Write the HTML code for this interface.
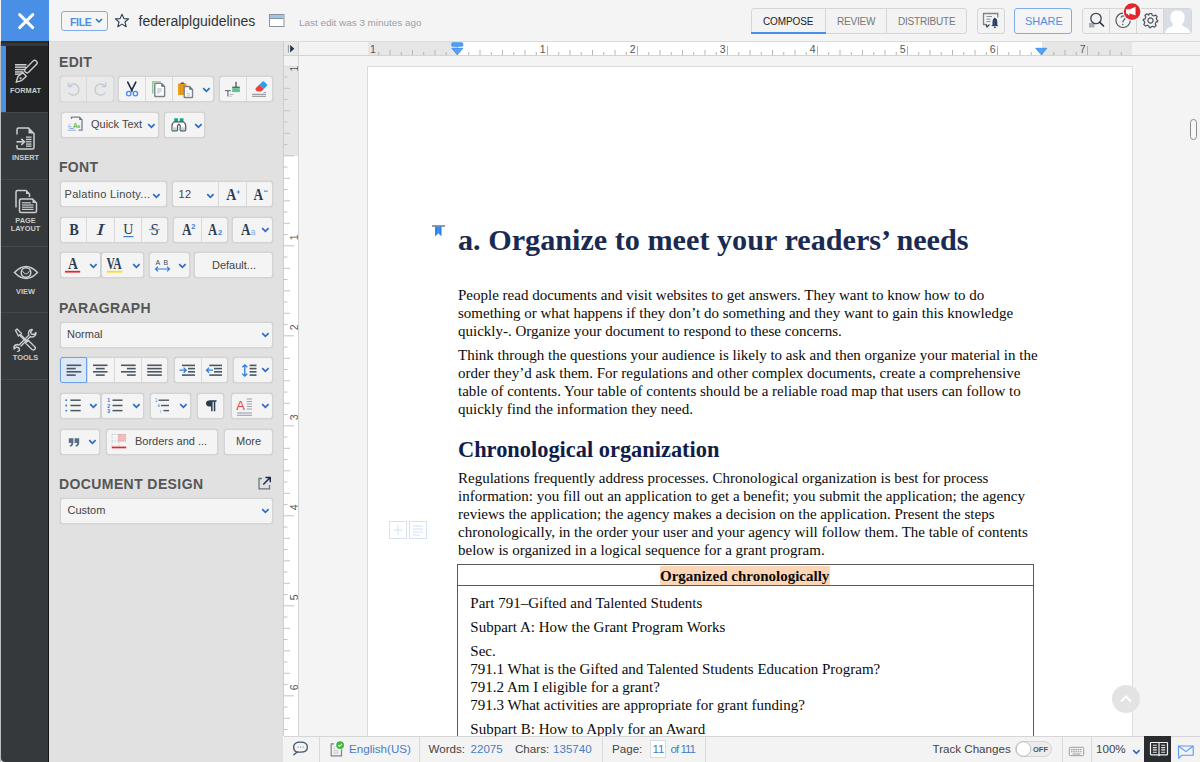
<!DOCTYPE html><html><head><meta charset="utf-8"><style>
*{box-sizing:border-box;margin:0;padding:0}
html,body{width:1200px;height:762px;overflow:hidden;background:#f4f4f4;font-family:"Liberation Sans",sans-serif;position:relative}
.a{position:absolute}
.t{position:absolute;white-space:nowrap}
.btn{position:absolute;background:#f4f4f4;border:1px solid #d4d4d4;border-radius:3px;box-shadow:0 0 1.2px rgba(0,0,0,0.18)}
.dis{background:#e9e9e9;border-color:#dcdcdc}
.dv{position:absolute;width:1px;background:#d9d9d9}
.h{position:absolute;left:59px;font-size:14px;font-weight:bold;color:#565656;line-height:14px;white-space:nowrap;letter-spacing:0.3px}
.bt{position:absolute;font-size:11px;color:#444;line-height:12px;white-space:nowrap}
.tlab{position:absolute;left:2px;width:47px;text-align:center;color:#c9cbcd;font-size:7.4px;font-weight:bold;line-height:8px;letter-spacing:0px}
.p{position:absolute;left:458px;font-family:"Liberation Serif",serif;font-size:15px;line-height:18px;white-space:nowrap;color:#1a1a1a}
.sb{position:absolute;font-size:11.6px;line-height:14px;color:#444;white-space:nowrap}
.bl{color:#4a7cc4}
</style></head><body>
<div class="a" style="left:0;top:0;width:1px;height:762px;background:#bdbdbd"></div>
<div class="a" style="left:0;top:0;width:1200px;height:42px;background:#f4f4f4;border-bottom:1px solid #dcdcdc"></div>
<div class="a" style="left:1px;top:0;width:48px;height:41.4px;background:#4a8fe6"></div>
<div class="a" style="left:1px;top:41px;width:47px;height:721px;background:#35393c;border-bottom-left-radius:4px"></div>
<div class="a" style="left:1px;top:41.4px;width:47px;height:1.6px;background:#2e2a1c"></div>
<div class="a" style="left:48px;top:41px;width:1px;height:721px;background:#141516"></div>
<div class="a" style="left:49px;top:42px;width:234px;height:720px;background:#e1e1e1"></div>
<svg class="a" style="left:1px;top:0" width="47" height="41"><path d="M18.6 14.6 L31.8 27.6 M31.8 14.6 L18.6 27.6" stroke="#fff" stroke-width="2.9" stroke-linecap="round"/></svg>
<div class="a" style="left:61px;top:11px;width:47px;height:20px;border:1px solid #80abee;border-radius:3px;background:#f5f5f5"></div>
<div class="t" style="left:70px;top:15.5px;font-size:10.5px;font-weight:bold;color:#4a8fe6;line-height:12px;letter-spacing:-0.3px">FILE</div>
<svg class="a" style="left:95px;top:18px" width="8" height="6"><path d="M1 1 L4 4 L7 1" stroke="#2f6bc4" stroke-width="1.5" fill="none"/></svg>
<svg class="a" style="left:114px;top:13px" width="16" height="15"><path d="M8 1.2 L9.9 5.6 L14.6 5.9 L11 9 L12.2 13.7 L8 11.1 L3.8 13.7 L5 9 L1.4 5.9 L6.1 5.6 Z" stroke="#2c3e50" stroke-width="1.1" fill="none" stroke-linejoin="round"/></svg>
<div class="t" style="left:138.5px;top:13px;font-size:14px;color:#333;line-height:16px">federalplguidelines</div>
<svg class="a" style="left:269px;top:14px" width="16" height="13"><rect x="0.5" y="0.5" width="14.5" height="12" fill="#fff" stroke="#8a939b"/><rect x="1" y="1" width="13.5" height="3" fill="#9cc7ea"/><path d="M1 4.5 H14.5" stroke="#8a939b"/></svg>
<div class="t" style="left:299px;top:17px;font-size:9.9px;color:#9aa0a6;line-height:11px">Last edit was 3 minutes ago</div>
<div class="a" style="left:751px;top:8px;width:216px;height:26px;border:1px solid #d6d6d6;border-radius:3px;background:#f3f3f3"></div>
<div class="a" style="left:825px;top:9px;width:1px;height:24px;background:#d6d6d6"></div>
<div class="a" style="left:886px;top:9px;width:1px;height:24px;background:#d6d6d6"></div>
<div class="a" style="left:751px;top:32px;width:75px;height:2px;background:#4a8fe6"></div>
<div class="t" style="left:763px;top:16px;font-size:10px;color:#222;line-height:11px;letter-spacing:-0.1px">COMPOSE</div>
<div class="t" style="left:837px;top:16px;font-size:10px;color:#777;line-height:11px;letter-spacing:-0.2px">REVIEW</div>
<div class="t" style="left:898px;top:16px;font-size:10px;color:#777;line-height:11px;letter-spacing:-0.2px">DISTRIBUTE</div>
<div class="a" style="left:977px;top:8px;width:28px;height:26px;border:1px solid #d6d6d6;border-radius:3px;background:#f3f3f3"></div>
<div class="a" style="left:1014px;top:8px;width:58px;height:26px;border:1px solid #7fabef;border-radius:3px;background:#f5f5f5"></div>
<div class="t" style="left:1025px;top:15px;font-size:11px;color:#4a8fe6;line-height:12px">SHARE</div>
<div class="a" style="left:1082px;top:8px;width:110px;height:26px;border:1px solid #d6d6d6;border-radius:3px;background:#f3f3f3;overflow:hidden"><div class="a" style="left:81px;top:0;width:29px;height:26px;background:#d8dde6"></div></div>
<div class="a" style="left:1109px;top:9px;width:1px;height:24px;background:#d6d6d6"></div>
<div class="a" style="left:1136px;top:9px;width:1px;height:24px;background:#d6d6d6"></div>
<div class="a" style="left:1163px;top:9px;width:1px;height:24px;background:#d6d6d6"></div>

<div class="a" style="left:1px;top:46px;width:47px;height:66px;background:#232425"></div>
<div class="a" style="left:1px;top:46px;width:5px;height:66px;background:#4a8fe6"></div>
<div class="a" style="left:6px;top:46px;width:1px;height:66px;background:#2a1f1a"></div>
<div class="a" style="left:1px;top:112px;width:47px;height:1px;background:#45484b"></div>
<div class="a" style="left:1px;top:179px;width:47px;height:1px;background:#45484b"></div>
<div class="a" style="left:1px;top:246px;width:47px;height:1px;background:#45484b"></div>
<div class="a" style="left:1px;top:312px;width:47px;height:1px;background:#45484b"></div>
<div class="a" style="left:1px;top:379px;width:47px;height:1px;background:#45484b"></div>
<div class="tlab" style="top:87px">FORMAT</div>
<div class="tlab" style="top:153.5px">INSERT</div>
<div class="tlab" style="top:216.5px">PAGE</div>
<div class="tlab" style="top:224.5px">LAYOUT</div>
<div class="tlab" style="top:288px">VIEW</div>
<div class="tlab" style="top:353.5px">TOOLS</div>
<div class="h" style="top:55px">EDIT</div>
<div class="h" style="top:159.5px">FONT</div>
<div class="h" style="top:300.5px">PARAGRAPH</div>
<div class="h" style="top:476.5px;letter-spacing:0.4px">DOCUMENT DESIGN</div>
<div class="btn dis" style="left:60px;top:76px;width:54px;height:26px"></div><div class="dv" style="left:86px;top:77px;height:24px"></div>
<div class="btn " style="left:118px;top:76px;width:96px;height:26px"></div><div class="dv" style="left:145px;top:77px;height:24px"></div><div class="dv" style="left:172px;top:77px;height:24px"></div>
<div class="btn " style="left:219px;top:76px;width:54px;height:26px"></div><div class="dv" style="left:246px;top:77px;height:24px"></div>
<svg class="a" style="left:202px;top:86px" width="9" height="8"><path d="M1.2 2.2 L4.4 5.4 L7.6 2.2" stroke="#2f6bc4" stroke-width="1.7" fill="none"/></svg>
<div class="btn " style="left:61px;top:112px;width:98px;height:26px"></div>
<div class="bt" style="left:91px;top:118px">Quick Text</div>
<svg class="a" style="left:147px;top:122px" width="9" height="8"><path d="M1.2 2.2 L4.4 5.4 L7.6 2.2" stroke="#2f6bc4" stroke-width="1.7" fill="none"/></svg>
<div class="btn " style="left:164px;top:112px;width:41px;height:26px"></div>
<svg class="a" style="left:194px;top:122px" width="9" height="8"><path d="M1.2 2.2 L4.4 5.4 L7.6 2.2" stroke="#2f6bc4" stroke-width="1.7" fill="none"/></svg>
<div class="btn " style="left:60px;top:181px;width:107px;height:26px"></div>
<div class="bt" style="left:64.5px;top:188px;letter-spacing:0.3px">Palatino Linoty...</div>
<svg class="a" style="left:152px;top:192px" width="9" height="8"><path d="M1.2 2.2 L4.4 5.4 L7.6 2.2" stroke="#2f6bc4" stroke-width="1.7" fill="none"/></svg>
<div class="btn " style="left:172px;top:181px;width:101px;height:26px"></div><div class="dv" style="left:218px;top:182px;height:24px"></div><div class="dv" style="left:246px;top:182px;height:24px"></div>
<div class="bt" style="left:178.5px;top:188px;font-size:11px;letter-spacing:0.3px">12</div>
<svg class="a" style="left:206px;top:192px" width="9" height="8"><path d="M1.2 2.2 L4.4 5.4 L7.6 2.2" stroke="#2f6bc4" stroke-width="1.7" fill="none"/></svg>
<div class="btn " style="left:60px;top:217px;width:108px;height:26px"></div><div class="dv" style="left:86px;top:218px;height:24px"></div><div class="dv" style="left:114px;top:218px;height:24px"></div><div class="dv" style="left:141px;top:218px;height:24px"></div>
<div class="btn " style="left:173px;top:217px;width:55px;height:26px"></div><div class="dv" style="left:201px;top:218px;height:24px"></div>
<div class="btn " style="left:232px;top:217px;width:41px;height:26px"></div>
<svg class="a" style="left:261px;top:226px" width="9" height="8"><path d="M1.2 2.2 L4.4 5.4 L7.6 2.2" stroke="#2f6bc4" stroke-width="1.7" fill="none"/></svg>
<div class="btn " style="left:60px;top:252px;width:41px;height:26px"></div>
<svg class="a" style="left:89px;top:262px" width="9" height="8"><path d="M1.2 2.2 L4.4 5.4 L7.6 2.2" stroke="#2f6bc4" stroke-width="1.7" fill="none"/></svg>
<div class="btn " style="left:101px;top:252px;width:43px;height:26px"></div>
<svg class="a" style="left:132px;top:262px" width="9" height="8"><path d="M1.2 2.2 L4.4 5.4 L7.6 2.2" stroke="#2f6bc4" stroke-width="1.7" fill="none"/></svg>
<div class="btn " style="left:149px;top:252px;width:41px;height:26px"></div>
<svg class="a" style="left:178px;top:262px" width="9" height="8"><path d="M1.2 2.2 L4.4 5.4 L7.6 2.2" stroke="#2f6bc4" stroke-width="1.7" fill="none"/></svg>
<div class="btn " style="left:194px;top:252px;width:79px;height:26px"></div>
<div class="bt" style="left:212px;top:259px">Default...</div>
<div class="btn " style="left:60px;top:322px;width:213px;height:26px"></div>
<div class="bt" style="left:67px;top:328px">Normal</div>
<svg class="a" style="left:261px;top:331px" width="9" height="8"><path d="M1.2 2.2 L4.4 5.4 L7.6 2.2" stroke="#2f6bc4" stroke-width="1.7" fill="none"/></svg>
<div class="btn " style="left:60px;top:357px;width:108px;height:26px"></div><div class="dv" style="left:87px;top:358px;height:24px"></div><div class="dv" style="left:114px;top:358px;height:24px"></div><div class="dv" style="left:141px;top:358px;height:24px"></div>
<div class="a" style="left:59.5px;top:357px;width:27.5px;height:26px;background:#dce8f8;border:1px solid #6ea2e4;border-radius:3px 0 0 3px"></div>
<div class="btn " style="left:174px;top:357px;width:54px;height:26px"></div><div class="dv" style="left:201px;top:358px;height:24px"></div>
<div class="btn " style="left:233px;top:357px;width:40px;height:26px"></div>
<svg class="a" style="left:261px;top:366px" width="9" height="8"><path d="M1.2 2.2 L4.4 5.4 L7.6 2.2" stroke="#2f6bc4" stroke-width="1.7" fill="none"/></svg>
<div class="btn " style="left:60px;top:393px;width:41px;height:26px"></div>
<svg class="a" style="left:89px;top:402px" width="9" height="8"><path d="M1.2 2.2 L4.4 5.4 L7.6 2.2" stroke="#2f6bc4" stroke-width="1.7" fill="none"/></svg>
<div class="btn " style="left:101px;top:393px;width:43px;height:26px"></div>
<svg class="a" style="left:132px;top:402px" width="9" height="8"><path d="M1.2 2.2 L4.4 5.4 L7.6 2.2" stroke="#2f6bc4" stroke-width="1.7" fill="none"/></svg>
<div class="btn " style="left:150px;top:393px;width:41px;height:26px"></div>
<svg class="a" style="left:179px;top:402px" width="9" height="8"><path d="M1.2 2.2 L4.4 5.4 L7.6 2.2" stroke="#2f6bc4" stroke-width="1.7" fill="none"/></svg>
<div class="btn " style="left:197px;top:393px;width:27px;height:26px"></div>
<div class="btn " style="left:231px;top:393px;width:42px;height:26px"></div>
<svg class="a" style="left:261px;top:402px" width="9" height="8"><path d="M1.2 2.2 L4.4 5.4 L7.6 2.2" stroke="#2f6bc4" stroke-width="1.7" fill="none"/></svg>
<div class="btn " style="left:60px;top:429px;width:40px;height:26px"></div>
<svg class="a" style="left:88px;top:438px" width="9" height="8"><path d="M1.2 2.2 L4.4 5.4 L7.6 2.2" stroke="#2f6bc4" stroke-width="1.7" fill="none"/></svg>
<div class="btn " style="left:106px;top:429px;width:112px;height:26px"></div>
<div class="bt" style="left:135px;top:435px">Borders and ...</div>
<div class="btn " style="left:224px;top:429px;width:49px;height:26px"></div>
<div class="bt" style="left:236px;top:435px">More</div>
<div class="btn " style="left:60px;top:498px;width:213px;height:26px"></div>
<div class="bt" style="left:67.5px;top:504px">Custom</div>
<svg class="a" style="left:261px;top:507px" width="9" height="8"><path d="M1.2 2.2 L4.4 5.4 L7.6 2.2" stroke="#2f6bc4" stroke-width="1.7" fill="none"/></svg>
<div class="a" style="left:283px;top:42px;width:1px;height:694px;background:#cdcdcd"></div>
<div class="a" style="left:284px;top:42px;width:15px;height:694px;background:#fff;border-right:1px solid #d4d4d4"></div>
<div class="a" style="left:284px;top:42px;width:15px;height:14px;background:#e8e8e8;border-right:1px solid #d4d4d4"></div>
<div class="a" style="left:284px;top:56px;width:15px;height:10px;background:#f3f3f3;border-right:1px solid #d4d4d4"></div>
<div class="a" style="left:284px;top:66px;width:15px;height:89.5px;background:#e6e6e6;border-right:1px solid #d4d4d4"></div>
<div class="a" style="left:284px;top:55px;width:916px;height:1px;background:#d4d4d4"></div>
<div class="a" style="left:299px;top:42px;width:901px;height:13px;background:#f3f3f3"></div>
<div class="a" style="left:367.5px;top:42px;width:90px;height:13px;background:#e6e6e6"></div>
<div class="a" style="left:457.5px;top:42px;width:584px;height:13px;background:#fff"></div>
<div class="a" style="left:1041.5px;top:42px;width:90.5px;height:13px;background:#e6e6e6"></div>
<svg class="a" style="left:284px;top:42px" width="14" height="13"><rect x="3.9" y="3" width="1" height="7.6" fill="#8a96a3"/><path d="M6.2 3 L10.3 6.8 L6.2 10.6 Z" fill="#1e3350"/></svg>
<svg class="a" style="left:298px;top:42px" width="902" height="13"><rect x="80.25" y="10" width="1" height="3" fill="#b4b4b4"/><rect x="91.50" y="8" width="1" height="5" fill="#b4b4b4"/><rect x="102.75" y="10" width="1" height="3" fill="#b4b4b4"/><rect x="114.00" y="8" width="1" height="5" fill="#b4b4b4"/><rect x="125.25" y="10" width="1" height="3" fill="#b4b4b4"/><rect x="136.50" y="8" width="1" height="5" fill="#b4b4b4"/><rect x="147.75" y="10" width="1" height="3" fill="#b4b4b4"/><rect x="159.00" y="4" width="1" height="9" fill="#b4b4b4"/><rect x="170.25" y="10" width="1" height="3" fill="#b4b4b4"/><rect x="181.50" y="8" width="1" height="5" fill="#b4b4b4"/><rect x="192.75" y="10" width="1" height="3" fill="#b4b4b4"/><rect x="204.00" y="8" width="1" height="5" fill="#b4b4b4"/><rect x="215.25" y="10" width="1" height="3" fill="#b4b4b4"/><rect x="226.50" y="8" width="1" height="5" fill="#b4b4b4"/><rect x="237.75" y="10" width="1" height="3" fill="#b4b4b4"/><rect x="249.00" y="4" width="1" height="9" fill="#b4b4b4"/><rect x="260.25" y="10" width="1" height="3" fill="#b4b4b4"/><rect x="271.50" y="8" width="1" height="5" fill="#b4b4b4"/><rect x="282.75" y="10" width="1" height="3" fill="#b4b4b4"/><rect x="294.00" y="8" width="1" height="5" fill="#b4b4b4"/><rect x="305.25" y="10" width="1" height="3" fill="#b4b4b4"/><rect x="316.50" y="8" width="1" height="5" fill="#b4b4b4"/><rect x="327.75" y="10" width="1" height="3" fill="#b4b4b4"/><rect x="339.00" y="4" width="1" height="9" fill="#b4b4b4"/><rect x="350.25" y="10" width="1" height="3" fill="#b4b4b4"/><rect x="361.50" y="8" width="1" height="5" fill="#b4b4b4"/><rect x="372.75" y="10" width="1" height="3" fill="#b4b4b4"/><rect x="384.00" y="8" width="1" height="5" fill="#b4b4b4"/><rect x="395.25" y="10" width="1" height="3" fill="#b4b4b4"/><rect x="406.50" y="8" width="1" height="5" fill="#b4b4b4"/><rect x="417.75" y="10" width="1" height="3" fill="#b4b4b4"/><rect x="429.00" y="4" width="1" height="9" fill="#b4b4b4"/><rect x="440.25" y="10" width="1" height="3" fill="#b4b4b4"/><rect x="451.50" y="8" width="1" height="5" fill="#b4b4b4"/><rect x="462.75" y="10" width="1" height="3" fill="#b4b4b4"/><rect x="474.00" y="8" width="1" height="5" fill="#b4b4b4"/><rect x="485.25" y="10" width="1" height="3" fill="#b4b4b4"/><rect x="496.50" y="8" width="1" height="5" fill="#b4b4b4"/><rect x="507.75" y="10" width="1" height="3" fill="#b4b4b4"/><rect x="519.00" y="4" width="1" height="9" fill="#b4b4b4"/><rect x="530.25" y="10" width="1" height="3" fill="#b4b4b4"/><rect x="541.50" y="8" width="1" height="5" fill="#b4b4b4"/><rect x="552.75" y="10" width="1" height="3" fill="#b4b4b4"/><rect x="564.00" y="8" width="1" height="5" fill="#b4b4b4"/><rect x="575.25" y="10" width="1" height="3" fill="#b4b4b4"/><rect x="586.50" y="8" width="1" height="5" fill="#b4b4b4"/><rect x="597.75" y="10" width="1" height="3" fill="#b4b4b4"/><rect x="609.00" y="4" width="1" height="9" fill="#b4b4b4"/><rect x="620.25" y="10" width="1" height="3" fill="#b4b4b4"/><rect x="631.50" y="8" width="1" height="5" fill="#b4b4b4"/><rect x="642.75" y="10" width="1" height="3" fill="#b4b4b4"/><rect x="654.00" y="8" width="1" height="5" fill="#b4b4b4"/><rect x="665.25" y="10" width="1" height="3" fill="#b4b4b4"/><rect x="676.50" y="8" width="1" height="5" fill="#b4b4b4"/><rect x="687.75" y="10" width="1" height="3" fill="#b4b4b4"/><rect x="699.00" y="4" width="1" height="9" fill="#b4b4b4"/><rect x="710.25" y="10" width="1" height="3" fill="#b4b4b4"/><rect x="721.50" y="8" width="1" height="5" fill="#b4b4b4"/><rect x="732.75" y="10" width="1" height="3" fill="#b4b4b4"/><rect x="744.00" y="8" width="1" height="5" fill="#b4b4b4"/><rect x="755.25" y="10" width="1" height="3" fill="#b4b4b4"/><rect x="766.50" y="8" width="1" height="5" fill="#b4b4b4"/><rect x="777.75" y="10" width="1" height="3" fill="#b4b4b4"/><rect x="789.00" y="4" width="1" height="9" fill="#b4b4b4"/><rect x="800.25" y="10" width="1" height="3" fill="#b4b4b4"/><rect x="811.50" y="8" width="1" height="5" fill="#b4b4b4"/><rect x="822.75" y="10" width="1" height="3" fill="#b4b4b4"/><text x="72.00" y="10.6" font-size="10.5" fill="#555" font-family="Liberation Sans">1</text><text x="247.60" y="10.6" font-size="10.5" fill="#555" font-family="Liberation Sans" text-anchor="end">1</text><text x="337.60" y="10.6" font-size="10.5" fill="#555" font-family="Liberation Sans" text-anchor="end">2</text><text x="427.60" y="10.6" font-size="10.5" fill="#555" font-family="Liberation Sans" text-anchor="end">3</text><text x="517.60" y="10.6" font-size="10.5" fill="#555" font-family="Liberation Sans" text-anchor="end">4</text><text x="607.60" y="10.6" font-size="10.5" fill="#555" font-family="Liberation Sans" text-anchor="end">5</text><text x="697.60" y="10.6" font-size="10.5" fill="#555" font-family="Liberation Sans" text-anchor="end">6</text><text x="787.60" y="10.6" font-size="10.5" fill="#555" font-family="Liberation Sans" text-anchor="end">7</text></svg>
<svg class="a" style="left:451px;top:42px" width="13" height="14"><rect x="0.8" y="0.8" width="11" height="3.4" rx="0.8" fill="#5aa0f5" stroke="#2f86f0" stroke-width="0.8"/><path d="M0.8 6.3 H11.8 L6.3 12.8 Z" fill="#5aa0f5" stroke="#2f86f0" stroke-width="0.8" stroke-linejoin="round"/></svg>
<svg class="a" style="left:1035px;top:42px" width="13" height="14"><path d="M0.8 6.3 H11.8 L6.3 12.8 Z" fill="#5aa0f5" stroke="#2f86f0" stroke-width="0.8" stroke-linejoin="round"/></svg>
<svg class="a" style="left:284px;top:66px" width="14" height="670"><rect x="0" y="-0.70" width="10" height="1" fill="#c4c4c4"/><text x="0" y="0" font-size="10.5" fill="#555" font-family="Liberation Sans" transform="translate(13.6 2.60) rotate(-90)" text-anchor="middle">1</text><rect x="0" y="10.55" width="3.5" height="1" fill="#c4c4c4"/><rect x="0" y="21.80" width="6" height="1" fill="#c4c4c4"/><rect x="0" y="33.05" width="3.5" height="1" fill="#c4c4c4"/><rect x="0" y="44.30" width="6" height="1" fill="#c4c4c4"/><rect x="0" y="55.55" width="3.5" height="1" fill="#c4c4c4"/><rect x="0" y="66.80" width="6" height="1" fill="#c4c4c4"/><rect x="0" y="78.05" width="3.5" height="1" fill="#c4c4c4"/><rect x="0" y="89.30" width="10" height="1" fill="#c4c4c4"/><rect x="0" y="100.55" width="3.5" height="1" fill="#c4c4c4"/><rect x="0" y="111.80" width="6" height="1" fill="#c4c4c4"/><rect x="0" y="123.05" width="3.5" height="1" fill="#c4c4c4"/><rect x="0" y="134.30" width="6" height="1" fill="#c4c4c4"/><rect x="0" y="145.55" width="3.5" height="1" fill="#c4c4c4"/><rect x="0" y="156.80" width="6" height="1" fill="#c4c4c4"/><rect x="0" y="168.05" width="3.5" height="1" fill="#c4c4c4"/><rect x="0" y="179.30" width="10" height="1" fill="#c4c4c4"/><text x="0" y="0" font-size="10.5" fill="#555" font-family="Liberation Sans" transform="translate(13.6 171.30) rotate(-90)" text-anchor="middle">1</text><rect x="0" y="190.55" width="3.5" height="1" fill="#c4c4c4"/><rect x="0" y="201.80" width="6" height="1" fill="#c4c4c4"/><rect x="0" y="213.05" width="3.5" height="1" fill="#c4c4c4"/><rect x="0" y="224.30" width="6" height="1" fill="#c4c4c4"/><rect x="0" y="235.55" width="3.5" height="1" fill="#c4c4c4"/><rect x="0" y="246.80" width="6" height="1" fill="#c4c4c4"/><rect x="0" y="258.05" width="3.5" height="1" fill="#c4c4c4"/><rect x="0" y="269.30" width="10" height="1" fill="#c4c4c4"/><text x="0" y="0" font-size="10.5" fill="#555" font-family="Liberation Sans" transform="translate(13.6 261.30) rotate(-90)" text-anchor="middle">2</text><rect x="0" y="280.55" width="3.5" height="1" fill="#c4c4c4"/><rect x="0" y="291.80" width="6" height="1" fill="#c4c4c4"/><rect x="0" y="303.05" width="3.5" height="1" fill="#c4c4c4"/><rect x="0" y="314.30" width="6" height="1" fill="#c4c4c4"/><rect x="0" y="325.55" width="3.5" height="1" fill="#c4c4c4"/><rect x="0" y="336.80" width="6" height="1" fill="#c4c4c4"/><rect x="0" y="348.05" width="3.5" height="1" fill="#c4c4c4"/><rect x="0" y="359.30" width="10" height="1" fill="#c4c4c4"/><text x="0" y="0" font-size="10.5" fill="#555" font-family="Liberation Sans" transform="translate(13.6 351.30) rotate(-90)" text-anchor="middle">3</text><rect x="0" y="370.55" width="3.5" height="1" fill="#c4c4c4"/><rect x="0" y="381.80" width="6" height="1" fill="#c4c4c4"/><rect x="0" y="393.05" width="3.5" height="1" fill="#c4c4c4"/><rect x="0" y="404.30" width="6" height="1" fill="#c4c4c4"/><rect x="0" y="415.55" width="3.5" height="1" fill="#c4c4c4"/><rect x="0" y="426.80" width="6" height="1" fill="#c4c4c4"/><rect x="0" y="438.05" width="3.5" height="1" fill="#c4c4c4"/><rect x="0" y="449.30" width="10" height="1" fill="#c4c4c4"/><text x="0" y="0" font-size="10.5" fill="#555" font-family="Liberation Sans" transform="translate(13.6 441.30) rotate(-90)" text-anchor="middle">4</text><rect x="0" y="460.55" width="3.5" height="1" fill="#c4c4c4"/><rect x="0" y="471.80" width="6" height="1" fill="#c4c4c4"/><rect x="0" y="483.05" width="3.5" height="1" fill="#c4c4c4"/><rect x="0" y="494.30" width="6" height="1" fill="#c4c4c4"/><rect x="0" y="505.55" width="3.5" height="1" fill="#c4c4c4"/><rect x="0" y="516.80" width="6" height="1" fill="#c4c4c4"/><rect x="0" y="528.05" width="3.5" height="1" fill="#c4c4c4"/><rect x="0" y="539.30" width="10" height="1" fill="#c4c4c4"/><text x="0" y="0" font-size="10.5" fill="#555" font-family="Liberation Sans" transform="translate(13.6 531.30) rotate(-90)" text-anchor="middle">5</text><rect x="0" y="550.55" width="3.5" height="1" fill="#c4c4c4"/><rect x="0" y="561.80" width="6" height="1" fill="#c4c4c4"/><rect x="0" y="573.05" width="3.5" height="1" fill="#c4c4c4"/><rect x="0" y="584.30" width="6" height="1" fill="#c4c4c4"/><rect x="0" y="595.55" width="3.5" height="1" fill="#c4c4c4"/><rect x="0" y="606.80" width="6" height="1" fill="#c4c4c4"/><rect x="0" y="618.05" width="3.5" height="1" fill="#c4c4c4"/><rect x="0" y="629.30" width="10" height="1" fill="#c4c4c4"/><text x="0" y="0" font-size="10.5" fill="#555" font-family="Liberation Sans" transform="translate(13.6 621.30) rotate(-90)" text-anchor="middle">6</text><rect x="0" y="640.55" width="3.5" height="1" fill="#c4c4c4"/><rect x="0" y="651.80" width="6" height="1" fill="#c4c4c4"/><rect x="0" y="663.05" width="3.5" height="1" fill="#c4c4c4"/></svg>
<div class="a" style="left:367px;top:66px;width:766px;height:700px;background:#fff;border:1px solid #dcdcdc"></div>
<div class="a" style="left:1190px;top:119px;width:7px;height:21px;background:#f7f7f7;border:1px solid #8c8c8c;border-radius:3.5px"></div>
<div class="p" style="left:458px;top:221.56px;font-size:30.2px;line-height:36px;font-weight:bold;color:#1b2a52;">a. Organize to meet your readers’ needs</div>
<svg class="a" style="left:431px;top:224px" width="15" height="14"><path d="M1 2 H14" stroke="#3a4a5e" stroke-width="1.1"/><path d="M4 2.5 H10.6 V12.6 L7.3 9.3 L4 12.6 Z" fill="#3f8cf0"/><path d="M5.3 2.5 V10.8 M9.3 2.5 V10.8" stroke="#2277e8" stroke-width="0.8"/></svg>
<div class="p" style="left:458px;top:286.44px;font-size:15px;line-height:18px;color:#0a0a0a;">People read documents and visit websites to get answers. They want to know how to do</div>
<div class="p" style="left:458px;top:304.44px;font-size:15px;line-height:18px;color:#0a0a0a;">something or what happens if they don’t do something and they want to gain this knowledge</div>
<div class="p" style="left:458px;top:322.44px;font-size:15px;line-height:18px;color:#0a0a0a;">quickly-. Organize your document to respond to these concerns.</div>
<div class="p" style="left:458px;top:345.84px;font-size:15px;line-height:18px;color:#0a0a0a;">Think through the questions your audience is likely to ask and then organize your material in the</div>
<div class="p" style="left:458px;top:363.84px;font-size:15px;line-height:18px;color:#0a0a0a;">order they’d ask them. For regulations and other complex documents, create a comprehensive</div>
<div class="p" style="left:458px;top:381.84px;font-size:15px;line-height:18px;color:#0a0a0a;">table of contents. Your table of contents should be a reliable road map that users can follow to</div>
<div class="p" style="left:458px;top:399.84px;font-size:15px;line-height:18px;color:#0a0a0a;">quickly find the information they need.</div>
<div class="p" style="left:458px;top:437.34px;font-size:22.4px;line-height:26px;font-weight:bold;color:#0f1d4a;">Chronological organization</div>
<div class="p" style="left:458px;top:469.24px;font-size:15px;line-height:18px;color:#0a0a0a;">Regulations frequently address processes. Chronological organization is best for process</div>
<div class="p" style="left:458px;top:487.24px;font-size:15px;line-height:18px;color:#0a0a0a;">information: you fill out an application to get a benefit; you submit the application; the agency</div>
<div class="p" style="left:458px;top:505.24px;font-size:15px;line-height:18px;color:#0a0a0a;">reviews the application; the agency makes a decision on the application. Present the steps</div>
<div class="p" style="left:458px;top:523.24px;font-size:15px;line-height:18px;color:#0a0a0a;">chronologically, in the order your user and your agency will follow them. The table of contents</div>
<div class="p" style="left:458px;top:541.24px;font-size:15px;line-height:18px;color:#0a0a0a;">below is organized in a logical sequence for a grant program.</div>
<div class="a" style="left:457px;top:564px;width:577px;height:200px;border:1px solid #5a5a5a"></div>
<div class="a" style="left:458px;top:585px;width:575px;height:1px;background:#5a5a5a"></div>
<div class="a" style="left:659.5px;top:566px;width:170px;height:18.5px;background:#fcd6b6"></div>
<div class="p" style="left:660px;top:566.94px;font-size:15px;line-height:18px;font-weight:bold;color:#0a0a0a;">Organized chronologically</div>
<div class="p" style="left:470.3px;top:594.24px;font-size:15px;line-height:18px;color:#0a0a0a;">Part 791–Gifted and Talented Students</div>
<div class="p" style="left:470.3px;top:618.44px;font-size:15px;line-height:18px;color:#0a0a0a;">Subpart A: How the Grant Program Works</div>
<div class="p" style="left:470.3px;top:642.14px;font-size:15px;line-height:18px;color:#0a0a0a;">Sec.</div>
<div class="p" style="left:470.3px;top:660.34px;font-size:15px;line-height:18px;color:#0a0a0a;">791.1 What is the Gifted and Talented Students Education Program?</div>
<div class="p" style="left:470.3px;top:678.24px;font-size:15px;line-height:18px;color:#0a0a0a;">791.2 Am I eligible for a grant?</div>
<div class="p" style="left:470.3px;top:696.24px;font-size:15px;line-height:18px;color:#0a0a0a;">791.3 What activities are appropriate for grant funding?</div>
<div class="p" style="left:470.3px;top:720.34px;font-size:15px;line-height:18px;color:#0a0a0a;">Subpart B: How to Apply for an Award</div>
<svg class="a" style="left:389px;top:521px" width="40" height="20"><rect x="0.5" y="0.5" width="17" height="17" fill="none" stroke="#d3e0f5"/><path d="M9 4.5 V13.5 M4.5 9 H13.5" stroke="#d3e0f5"/><rect x="20.5" y="0.5" width="17" height="17" fill="none" stroke="#d3e0f5"/><path d="M24 5 H34 M24 8 H34 M24 11 H34 M24 14 H31" stroke="#d3e0f5"/></svg>
<svg class="a" style="left:1111px;top:684px" width="30" height="30"><circle cx="15" cy="15" r="14" fill="#e3e3e3"/><path d="M10 17.5 L15 12.5 L20 17.5" stroke="#fff" stroke-width="2" fill="none"/></svg>
<div class="a" style="left:284px;top:736px;width:916px;height:26px;background:#f3f3f3;border-top:1px solid #d6d6d6"></div>
<div class="a" style="left:318.5px;top:737px;width:1px;height:25px;background:#dadada"></div>
<div class="a" style="left:419px;top:737px;width:1px;height:25px;background:#dadada"></div>
<div class="a" style="left:602px;top:737px;width:1px;height:25px;background:#dadada"></div>
<div class="a" style="left:705px;top:737px;width:1px;height:25px;background:#dadada"></div>
<div class="a" style="left:1062px;top:737px;width:1px;height:25px;background:#dadada"></div>
<div class="a" style="left:1091px;top:737px;width:1px;height:25px;background:#dadada"></div>
<div class="a" style="left:1144px;top:736px;width:27px;height:26px;background:#2a2d30"></div>
<div class="sb" style="left:349px;top:742.4px;color:#4a7cc4">English(US)</div>
<div class="sb" style="left:428.5px;top:742.4px">Words:</div>
<div class="sb" style="left:470.5px;top:742.4px;color:#4a7cc4">22075</div>
<div class="sb" style="left:515px;top:742.4px">Chars:</div>
<div class="sb" style="left:553px;top:742.4px;color:#4a7cc4">135740</div>
<div class="sb" style="left:612px;top:742.4px">Page:</div>
<div class="a" style="left:650px;top:740px;width:16px;height:18px;background:#fff;border:1px solid #dcdcdc"></div>
<div class="sb" style="left:652.5px;top:742.4px;color:#4a7cc4">11</div>
<div class="sb" style="left:670.5px;top:742.4px;color:#4a7cc4;letter-spacing:-1px">of 111</div>
<div class="sb" style="left:932.5px;top:742.4px">Track Changes</div>
<div class="sb" style="left:1096px;top:742.4px">100%</div>
<svg class="a" style="left:1132px;top:748px" width="9" height="8"><path d="M1.2 2.2 L4.4 5.4 L7.6 2.2" stroke="#2f6bc4" stroke-width="1.7" fill="none"/></svg>
<svg class="a" style="left:1px;top:55px" width="47" height="32">
<g fill="#cbcdcf"><rect x="14" y="9" width="11.5" height="1.5"/><rect x="14" y="11.4" width="11" height="1.5"/><rect x="14" y="13.8" width="10" height="1.5"/><rect x="14" y="16.2" width="8.5" height="1.5"/><rect x="14" y="18.4" width="7" height="1.5"/></g>
<g transform="translate(28.3 13.2) rotate(45)"><rect x="-2.4" y="-10" width="4.8" height="15.5" rx="2.4" fill="#232425" stroke="#cbcdcf" stroke-width="1.4"/></g>
<path d="M21.6 17.6 L25.3 21.3 L20.6 25.6 L15.2 27.2 L16.8 21.8 Z" fill="#232425" stroke="#cbcdcf" stroke-width="1.4" stroke-linejoin="round"/>
<circle cx="19.6" cy="23.3" r="1.1" fill="#cbcdcf"/>
</svg>
<svg class="a" style="left:1px;top:125px" width="47" height="28">
<path d="M16 9.5 V4.5 Q16 3 17.5 3 H27.5 L33 8.5 V22.5 Q33 24 31.5 24 H17.5 Q16 24 16 22.5 V20" fill="none" stroke="#cbcdcf" stroke-width="1.5"/>
<path d="M27.5 3 V8.5 H33 Z" fill="#cbcdcf"/>
<path d="M15.5 16.8 H22.5" stroke="#cbcdcf" stroke-width="1.6"/><path d="M20.3 13.8 L23.5 16.8 L20.3 19.8" fill="none" stroke="#cbcdcf" stroke-width="1.6"/>
<g fill="#cbcdcf"><rect x="25" y="11.5" width="5.5" height="1.3"/><rect x="25" y="13.8" width="5.5" height="1.3"/><rect x="25" y="16.1" width="5.5" height="1.3"/><rect x="25" y="18.4" width="5.5" height="1.3"/><rect x="25" y="20.5" width="5.5" height="1.3"/></g>
</svg>
<svg class="a" style="left:1px;top:187px" width="47" height="28">
<path d="M15 20.5 V5 Q15 3.5 16.5 3.5 H25 L28.5 7 V10" fill="none" stroke="#cbcdcf" stroke-width="1.5"/>
<path d="M25 3.5 V7 H28.5 Z" fill="#cbcdcf"/>
<path d="M18.5 13.5 Q18.5 12 20 12 H31.5 L35.5 16 V24 Q35.5 25.5 34 25.5 H20 Q18.5 25.5 18.5 24 Z" fill="#35393c" stroke="#cbcdcf" stroke-width="1.5"/>
<path d="M31.5 12 V16 H35.5 Z" fill="#cbcdcf"/>
<g fill="#cbcdcf"><rect x="21" y="15.2" width="9" height="1.2"/><rect x="21" y="17.4" width="11.5" height="1.2"/><rect x="21" y="19.6" width="11.5" height="1.2"/><rect x="21" y="21.8" width="11.5" height="1.2"/></g>
</svg>
<svg class="a" style="left:1px;top:262px" width="47" height="22">
<path d="M13.5 10.5 Q25 -1.5 36.5 10.5 Q25 22.5 13.5 10.5 Z" fill="none" stroke="#cbcdcf" stroke-width="1.5"/>
<circle cx="25" cy="10.5" r="4.8" fill="none" stroke="#cbcdcf" stroke-width="1.5"/>
<path d="M21.5 9 Q25 15 28.5 9" fill="none" stroke="#cbcdcf" stroke-width="1"/>
</svg>
<svg class="a" style="left:1px;top:326px" width="47" height="26">
<g fill="none" stroke="#cbcdcf" stroke-width="1.4" stroke-linejoin="round">
<path d="M14.5 4.5 L16 3 L20.5 7.5 L19.5 8.5 L26.5 15.5 L27.5 14.5 L34 21 Q35 22.5 33.5 23.5 Q32.5 24.5 31 23.5 L24.5 17 L25.5 16 L18.5 9 L17.5 10 Z"/>
<path d="M30 4 Q26 4 26 8 Q26 9 26.5 9.5 L16.5 19.5 Q15.5 19 14.5 19 Q11 19.5 11.5 23.5 L14 21.5 L16.5 22.5 L17 25 L14.5 26.5" transform="translate(1.5 -0.5)"/>
<path d="M30 4 L28 6.5 L29 8.5 L31.5 9 L33.5 7 Q33.5 11 29.5 11.5 Q28.5 11.5 28 11 L18 21" transform="translate(1.5 -0.5)"/>
</g>
</svg>
<svg class="a" style="left:60px;top:77px" width="54" height="25">
<path d="M9.2 8.8 A5.6 5.6 0 1 1 8.6 15.5" fill="none" stroke="#c6cbd1" stroke-width="1.4"/>
<path d="M8.3 5.5 V9.5 H12.3" fill="none" stroke="#b7cde6" stroke-width="1.3"/>
<path d="M44.8 8.8 A5.6 5.6 0 1 0 45.4 15.5" fill="none" stroke="#c6cbd1" stroke-width="1.4"/>
<path d="M45.7 5.5 V9.5 H41.7" fill="none" stroke="#b7cde6" stroke-width="1.3"/>
</svg>
<svg class="a" style="left:118px;top:77px" width="27" height="25">
<path d="M9.7 5.2 L14.2 13.8 M17.8 5.2 L13.4 13.8" stroke="#1e2b45" stroke-width="1.6" stroke-linecap="round"/>
<circle cx="10.75" cy="16.6" r="2.2" fill="none" stroke="#4a8af0" stroke-width="1.3"/>
<circle cx="17.4" cy="16.6" r="2.2" fill="none" stroke="#4a8af0" stroke-width="1.3"/>
</svg>
<svg class="a" style="left:145px;top:77px" width="27" height="25">
<path d="M7.8 16.5 V4.8 H15.8" fill="none" stroke="#7cc47c" stroke-width="1.2"/>
<path d="M9.8 7 Q9.8 6.4 10.4 6.4 H16.5 L19.6 9.5 V18.9 Q19.6 19.5 19 19.5 H10.4 Q9.8 19.5 9.8 18.9 Z" fill="#fff" stroke="#7b818a" stroke-width="1.4"/>
<path d="M16.3 6.5 V9.7 H19.5" fill="#5d6570"/>
<path d="M12 12 H17 M12 14 H17 M12 16 H14.5" stroke="#8fb4b8" stroke-width="0.9"/>
</svg>
<svg class="a" style="left:172px;top:77px" width="30" height="25">
<rect x="6" y="6.5" width="8.5" height="11.5" fill="#f0a020"/>
<path d="M8.5 7 V18 M11 7 V18" stroke="#d68a10" stroke-width="0.8"/>
<path d="M8 6.8 Q10.5 3.5 13 6.8 Z" fill="#1e3a5c"/>
<path d="M12.2 10 Q12.2 9.5 12.7 9.5 H17.5 L20.5 12.5 V20 Q20.5 20.5 20 20.5 H12.7 Q12.2 20.5 12.2 20 Z" fill="#fff" stroke="#7b818a" stroke-width="1.4"/>
<path d="M17.3 9.6 V12.7 H20.4" fill="#5d6570"/>
<path d="M14.5 14.5 H15.5 M14.5 16.5 H18 M14.5 18.2 H18" stroke="#a6c0c4" stroke-width="0.8"/>
</svg>
<svg class="a" style="left:219px;top:77px" width="27" height="25">
<rect x="16.2" y="4.8" width="1.7" height="5.5" fill="#6f7882"/>
<rect x="13.2" y="9.6" width="7.6" height="1.6" fill="#5d6670"/>
<rect x="13.2" y="11.2" width="7.6" height="3.9" fill="#5cc48c"/>
<path d="M6 13.6 H11.8 M8.9 13.6 V19.6" stroke="#6f7882" stroke-width="1.3"/>
<path d="M10.7 17.5 H14.5 M10.7 19.2 H12.5" stroke="#9aa3ac" stroke-width="0.8"/>
</svg>
<svg class="a" style="left:246px;top:77px" width="27" height="25">
<path d="M13.5 7.5 L16.5 4.6 Q17.3 3.8 18.1 4.6 L20.8 7.3 Q21.6 8.1 20.8 8.9 L17.9 11.9 Z" fill="#2a9ef0"/>
<path d="M13.5 7.5 L17.9 11.9 L15.2 14.6 H11.3 L9.7 13 Q9 12.3 9.7 11.3 Z" fill="#e8433d"/>
<path d="M6 17.3 H20 M6 19.4 H20" stroke="#9aa1a8" stroke-width="1.3"/>
<path d="M17.5 15.4 H20" stroke="#9aa1a8" stroke-width="1"/>
</svg>
<svg class="a" style="left:61px;top:112px" width="30" height="25">
<path d="M10.5 7 V5.2 H18.5 L21 7.7 V18.2 H17.5" fill="none" stroke="#77808a" stroke-width="1.3"/>
<path d="M18.3 5.4 V7.9 H20.8" fill="#5d6570"/>
<text x="12" y="16" font-family="Liberation Sans" font-weight="bold" font-size="6.5" fill="#6abf40">A</text><text x="16.3" y="16" font-family="Liberation Sans" font-weight="bold" font-size="5" fill="#6abf40">a</text>
<path d="M7.5 13.5 L9.5 12 M7 14.8 H10.5 M8.5 16.5 H13 M6.5 18.2 H15" stroke="#8fb4e0" stroke-width="1"/>
</svg>
<svg class="a" style="left:164px;top:112px" width="41" height="26">
<rect x="10.2" y="6.3" width="3.8" height="3.6" fill="#17a58a"/><rect x="15.7" y="6.3" width="3.8" height="3.6" fill="#17a58a"/>
<path d="M10 9.9 Q8 11.6 8 14 V18 Q8 18.8 8.8 18.8 H12.7 Q13.5 18.8 13.5 18 V13.6 L14.85 12.2 L16.2 13.6 V18 Q16.2 18.8 17 18.8 H20.9 Q21.7 18.8 21.7 18 V14 Q21.7 11.6 19.7 9.9 Z" fill="#fff" stroke="#4a5862" stroke-width="1.2" stroke-linejoin="round"/>
<rect x="8.6" y="15.3" width="4.3" height="2.8" fill="#bcd6d6"/><rect x="16.8" y="15.3" width="4.3" height="2.8" fill="#bcd6d6"/>
</svg>
<svg class="a" style="left:0;top:0" width="290" height="300"><text x="226.2" y="199.5" font-family="Liberation Serif" font-weight="bold" font-style="normal" font-size="16" fill="#2b3d52" textLength="10" lengthAdjust="spacingAndGlyphs">A</text><path d="M236.6 192 H240.2 M238.4 190.2 V193.8" stroke="#5b8fd8" stroke-width="1.2"/><text x="253.5" y="199.5" font-family="Liberation Serif" font-weight="bold" font-style="normal" font-size="16" fill="#2b3d52" textLength="9.6" lengthAdjust="spacingAndGlyphs">A</text><path d="M264 191.2 H267.8" stroke="#5b8fd8" stroke-width="1.2"/><text x="69.2" y="235.2" font-family="Liberation Serif" font-weight="bold" font-style="normal" font-size="16" fill="#2b3d52" textLength="9.6" lengthAdjust="spacingAndGlyphs">B</text><text x="96.2" y="235.2" font-family="Liberation Serif" font-weight="normal" font-style="italic" font-size="16.5" fill="#2b3d52" textLength="8.3" lengthAdjust="spacingAndGlyphs">I</text><text x="123.3" y="233.6" font-family="Liberation Serif" font-weight="normal" font-style="normal" font-size="14.5" fill="#2b3d52" textLength="10.1" lengthAdjust="spacingAndGlyphs">U</text><path d="M123.3 236.6 H133.4" stroke="#3a7fd8" stroke-width="1.2"/><text x="150.4" y="235.2" font-family="Liberation Serif" font-weight="normal" font-style="normal" font-size="16" fill="#2b3d52" textLength="8.3" lengthAdjust="spacingAndGlyphs">S</text><path d="M149 229.5 H160" stroke="#7fa8e8" stroke-width="1.3"/><text x="182" y="235.2" font-family="Liberation Serif" font-weight="bold" font-style="normal" font-size="16" fill="#2b3d52" textLength="9.5" lengthAdjust="spacingAndGlyphs">A</text><text x="191.3" y="229.2" font-family="Liberation Sans" font-weight="bold" font-size="7.5" fill="#3a7fd8">2</text><text x="208" y="235.2" font-family="Liberation Serif" font-weight="bold" font-style="normal" font-size="16" fill="#2b3d52" textLength="9.2" lengthAdjust="spacingAndGlyphs">A</text><text x="218" y="235.2" font-family="Liberation Sans" font-weight="bold" font-size="7.5" fill="#3a7fd8">2</text><text x="240.9" y="235.2" font-family="Liberation Serif" font-weight="bold" font-style="normal" font-size="16" fill="#2b3d52" textLength="9.5" lengthAdjust="spacingAndGlyphs">A</text><text x="250.8" y="235.2" font-family="Liberation Sans" font-size="8.5" fill="#7fa8e8">a</text></svg>
<svg class="a" style="left:0;top:0" width="290" height="300"><text x="68.1" y="269" font-family="Liberation Serif" font-weight="bold" font-style="normal" font-size="16" fill="#2b3d52" textLength="9.9" lengthAdjust="spacingAndGlyphs">A</text><rect x="65" y="270.8" width="15.2" height="1.8" fill="#e8262e"/><text x="106.5" y="269" font-family="Liberation Serif" font-weight="bold" font-style="normal" font-size="16" fill="#2b3d52" textLength="15.2" lengthAdjust="spacingAndGlyphs">VA</text><rect x="106.7" y="270.8" width="15.6" height="1.8" fill="#f5e11e"/></svg>
<svg class="a" style="left:149px;top:253px" width="30" height="25"><text x="6.5" y="11.5" font-family="Liberation Sans" font-size="7" fill="#3d4a57">A</text><text x="14.5" y="11.5" font-family="Liberation Sans" font-size="7" fill="#3d4a57">B</text><path d="M6.5 16 H20.5 M9 13.6 L6.5 16 L9 18.4 M18 13.6 L20.5 16 L18 18.4" fill="none" stroke="#2e7ce0" stroke-width="1.2"/></svg>
<svg class="a" style="left:0;top:0" width="290" height="500"><path d="M66.6 365.3 H81.3" stroke="#4a5763" stroke-width="1.6"/><path d="M66.6 368.6 H75.7" stroke="#4a5763" stroke-width="1.6"/><path d="M66.6 371.8 H81.3" stroke="#4a5763" stroke-width="1.6"/><path d="M66.6 375.1 H75.7" stroke="#4a5763" stroke-width="1.6"/><path d="M93 365.3 H107.5" stroke="#4a5763" stroke-width="1.6"/><path d="M95.8 368.6 H104.7" stroke="#4a5763" stroke-width="1.6"/><path d="M93 371.8 H107.5" stroke="#4a5763" stroke-width="1.6"/><path d="M95.8 375.1 H104.7" stroke="#4a5763" stroke-width="1.6"/><path d="M121 365.3 H135.7" stroke="#4a5763" stroke-width="1.6"/><path d="M126.9 368.6 H135.7" stroke="#4a5763" stroke-width="1.6"/><path d="M121 371.8 H135.7" stroke="#4a5763" stroke-width="1.6"/><path d="M126.9 375.1 H135.7" stroke="#4a5763" stroke-width="1.6"/><path d="M147.2 365.3 H161.8" stroke="#4a5763" stroke-width="1.6"/><path d="M147.2 368.6 H161.8" stroke="#4a5763" stroke-width="1.6"/><path d="M147.2 371.8 H161.8" stroke="#4a5763" stroke-width="1.6"/><path d="M147.2 375.1 H161.8" stroke="#4a5763" stroke-width="1.6"/><path d="M182 365.4 H195" stroke="#4a5763" stroke-width="1.6"/><path d="M188 368.6 H195" stroke="#4a5763" stroke-width="1.6"/><path d="M188 371.8 H195" stroke="#4a5763" stroke-width="1.6"/><path d="M182 375.1 H195" stroke="#4a5763" stroke-width="1.6"/><path d="M179.5 370.2 H186 M183.6 367.6 L186.2 370.2 L183.6 372.8" fill="none" stroke="#2e7ce0" stroke-width="1.3"/><path d="M209.3 365.4 H222" stroke="#4a5763" stroke-width="1.6"/><path d="M214 368.6 H222" stroke="#4a5763" stroke-width="1.6"/><path d="M214 371.8 H222" stroke="#4a5763" stroke-width="1.6"/><path d="M209.3 375.1 H222" stroke="#4a5763" stroke-width="1.6"/><path d="M206.5 370.2 H213 M209.1 367.6 L206.5 370.2 L209.1 372.8" fill="none" stroke="#2e7ce0" stroke-width="1.3"/><path d="M244.8 365 V376 M242.3 367.3 L244.8 364.8 L247.3 367.3 M242.3 373.7 L244.8 376.2 L247.3 373.7" fill="none" stroke="#2e7ce0" stroke-width="1.3"/><path d="M249.6 365.4 H256.5" stroke="#4a5763" stroke-width="1.6"/><path d="M249.6 368.6 H256.5" stroke="#4a5763" stroke-width="1.6"/><path d="M249.6 371.8 H256.5" stroke="#4a5763" stroke-width="1.6"/><path d="M249.6 375.1 H256.5" stroke="#4a5763" stroke-width="1.6"/><circle cx="66.2" cy="400.2" r="0.9" fill="#2e6fd0"/><path d="M70.4 400.2 H80.7" stroke="#4a5763" stroke-width="1.5"/><circle cx="66.2" cy="405.5" r="0.9" fill="#2e6fd0"/><path d="M70.4 405.5 H80.7" stroke="#4a5763" stroke-width="1.5"/><circle cx="66.2" cy="410.6" r="0.9" fill="#2e6fd0"/><path d="M70.4 410.6 H80.7" stroke="#4a5763" stroke-width="1.5"/><text x="107.2" y="402.2" font-family="Liberation Sans" font-weight="bold" font-size="5" fill="#2e6fd0">1</text><path d="M112.5 400.2 H122.5" stroke="#4a5763" stroke-width="1.5"/><text x="107.2" y="407.5" font-family="Liberation Sans" font-weight="bold" font-size="5" fill="#2e6fd0">2</text><path d="M112.5 405.5 H122.5" stroke="#4a5763" stroke-width="1.5"/><text x="107.2" y="412.6" font-family="Liberation Sans" font-weight="bold" font-size="5" fill="#2e6fd0">3</text><path d="M112.5 410.6 H122.5" stroke="#4a5763" stroke-width="1.5"/><text x="155" y="402" font-family="Liberation Sans" font-size="4.5" fill="#5b8fd8">1</text><path d="M158.5 400.2 H169" stroke="#4a5763" stroke-width="1.4"/><text x="157.5" y="407.2" font-family="Liberation Sans" font-size="4.5" fill="#5b8fd8">a</text><path d="M161 405.5 H169" stroke="#4a5763" stroke-width="1.4"/><text x="160" y="412.5" font-family="Liberation Sans" font-size="4.5" fill="#5b8fd8">i</text><path d="M163.5 410.6 H169" stroke="#4a5763" stroke-width="1.4"/><path d="M210.6 400.2 H216.5 V401.8 H215.3 V411.2 H213.8 V401.8 H212.6 V411.2 H211.1 V406.6 Q206 406.6 206 403.4 Q206 400.2 210.6 400.2 Z" fill="#2b3d52"/><text x="236.3" y="410" font-family="Liberation Sans" font-size="13" fill="#e8433d">A</text><path d="M246.8 399 H252" stroke="#9aa1a8" stroke-width="1"/><path d="M246.8 401.5 H252" stroke="#9aa1a8" stroke-width="1"/><path d="M246.8 404 H252" stroke="#9aa1a8" stroke-width="1"/><path d="M246.8 406.5 H252" stroke="#9aa1a8" stroke-width="1"/><path d="M246.8 409 H252" stroke="#9aa1a8" stroke-width="1"/><path d="M237 413 H252" stroke="#9aa1a8" stroke-width="1.1"/><path d="M237 415.3 H252" stroke="#9aa1a8" stroke-width="1.1"/><path d="M68.8 438.3 H73.4 V442.8 Q73.4 445.8 70.2 446.8 L69.6 445.6 Q71.4 444.8 71.5 442.9 H68.8 Z M74.6 438.3 H79.2 V442.8 Q79.2 445.8 76 446.8 L75.4 445.6 Q77.2 444.8 77.3 442.9 H74.6 Z" fill="#5a6d85"/><rect x="118" y="434" width="8" height="7.5" fill="#f7b9b9"/><path d="M112 434.5 V447 M112 434.5 H126 M112 441 H126 M119 434.5 V447" stroke="#9bb" stroke-width="0.8" stroke-dasharray="1 1.6"/><rect x="111.8" y="446.6" width="14.4" height="1.7" fill="#e8262e"/><path d="M262 478.5 H259 V488.8 H269.5 V485" fill="none" stroke="#6b7580" stroke-width="1.3"/><path d="M263.3 484.5 L270 477.8 M265.5 477.5 H270.3 V482.3" fill="none" stroke="#17294a" stroke-width="1.4"/></svg>
<svg class="a" style="left:975px;top:5px" width="35" height="32">
<path d="M11 19.5 H8.5 V8.5 H22.8 V12.5" fill="none" stroke="#7b838c" stroke-width="1.3"/>
<path d="M11 19.3 L12 22 L14.5 19.5" fill="none" stroke="#2b3d52" stroke-width="1.2"/>
<path d="M11.5 11.5 H17 M11.5 14.2 H15.5 M11.5 16.5 H15.5" stroke="#8a929a" stroke-width="1"/>
<path d="M16.9 20.7 L17.9 19.5 V16.6 Q17.9 13.5 19.9 13 Q21.9 13.5 21.9 16.6 V19.5 L22.9 20.7 Z" fill="#1e3a5c" stroke="#1e3a5c" stroke-width="0.7" stroke-linejoin="round"/>
<path d="M19.4 15.5 V19.5" stroke="#5a7390" stroke-width="0.7"/>
<circle cx="19.9" cy="22.3" r="0.9" fill="#1e3a5c"/>
</svg>
<svg class="a" style="left:1082px;top:0px" width="118" height="41">
<rect x="7" y="23" width="5.5" height="4.5" fill="#a9aeb3"/>
<circle cx="14" cy="18.5" r="5.2" fill="none" stroke="#3a4856" stroke-width="1.3"/>
<path d="M17.8 22.3 L21.5 26" stroke="#1e2b3a" stroke-width="1.6" stroke-linecap="round"/>
<circle cx="41.1" cy="20.3" r="7.2" fill="none" stroke="#4a5662" stroke-width="1.2"/>
<path d="M38.9 17.4 Q39.8 15.6 41.9 15.9 Q43.9 16.4 43.1 18.4 Q42.6 19.6 41.6 20.4 Q40.9 21.1 40.8 22.4" fill="none" stroke="#4a5662" stroke-width="1.2"/>
<circle cx="40.8" cy="24.5" r="0.75" fill="#4a5662"/>
<g transform="translate(68.5 20.5)" fill="none" stroke="#4a5662" stroke-width="1.2">
<path d="M-1.2 -7 H1.2 L1.7 -5.2 L3.4 -4.5 L5 -5.5 L6.7 -3.8 L5.7 -2.2 L6.3 -0.5 L7.2 -0.2 V0.2 L7.2 1.2 L5.4 1.7 L4.7 3.4 L5.6 5 L3.9 6.7 L2.3 5.7 L0.6 6.4 L0.1 7.2 H-1.2 L-1.7 5.4 L-3.4 4.7 L-5 5.6 L-6.7 3.9 L-5.7 2.3 L-6.4 0.6 L-7.2 0.1 V-1.2 L-5.4 -1.7 L-4.7 -3.4 L-5.6 -5 L-3.9 -6.7 L-2.3 -5.7 L-1.6 -5.4 Z" stroke-linejoin="round"/>
<circle cx="0" cy="0" r="2.6"/>
</g>
<path d="M83 33 Q83.5 28 89.5 26.5 Q91 25.8 91 24 Q88 21.5 88.5 16 Q89 10.5 95.5 10.5 Q102 10.5 102.5 16 Q103 21.5 100 24 Q100 25.8 101.5 26.5 Q107.5 28 108 33 Z" fill="#fff"/>
<circle cx="50.1" cy="11.6" r="9.4" fill="#fff"/>
<circle cx="50.1" cy="11.6" r="8.4" fill="#e3262f"/>
<path d="M44 9.3 H47.6 V13.6 H44 Z M45.2 13.4 L46.4 15.2 H47.6 L47 13.4 Z M47.4 9.5 L53.5 6.7 V15.3 L47.4 13.4 Z" fill="#fff"/>
<path d="M55 7 V15.8" stroke="#c81d25" stroke-width="0.8"/>
</svg>
<svg class="a" style="left:284px;top:736px" width="916" height="26">
<path d="M12.8 16.2 Q9.6 14.6 9.6 11.2 Q9.6 6.2 16.5 6.2 Q23.4 6.2 23.4 11.2 Q23.4 16.2 16.5 16.2 Q14.8 16.2 13.6 15.8 L9.8 18.8 Z" fill="none" stroke="#46566a" stroke-width="1.3" stroke-linejoin="round"/>
<path d="M13.3 11.2 H14.6 M15.9 11.2 H17.2 M18.5 11.2 H19.8" stroke="#8fb0b8" stroke-width="1.2"/>
<path d="M50 7.8 H47.2 V19.8 H57.5 V12.5" fill="none" stroke="#7b838c" stroke-width="1.2"/>
<path d="M49.5 10.5 H50.5 M49.5 12.5 H51 M49.5 14.8 H54.5 M49.5 17 H54.5" stroke="#b5bcc2" stroke-width="0.9"/>
<circle cx="56.1" cy="9.1" r="4.6" fill="#f3f3f3"/><circle cx="56.1" cy="9.1" r="3.9" fill="#3cb83c"/>
<path d="M54.2 9.2 L55.6 10.5 L58 7.8" fill="none" stroke="#fff" stroke-width="1.1"/>
<rect x="731.5" y="5.5" width="36" height="15" rx="7.5" fill="#ececec" stroke="#d4d4d4"/>
<circle cx="739.5" cy="13" r="7.3" fill="#fff" stroke="#bdbdbd"/>
<text x="749" y="16" font-family="Liberation Sans" font-weight="bold" font-size="7.5" fill="#555">OFF</text>
<rect x="785.3" y="11.3" width="14.4" height="8.4" rx="1" fill="none" stroke="#9a9ea2" stroke-width="1"/>
<path d="M787 13.6 H798 M787 15.8 H798" stroke="#9a9ea2" stroke-width="1.1" stroke-dasharray="1.6 0.6"/>
<path d="M788.5 18 H796.5" stroke="#9a9ea2" stroke-width="1"/>
<path d="M866.5 7 Q866.5 6.5 867 6.5 H874.5 Q875 6.5 875 7 V18.8 H867 Q866.5 18.8 866.5 18.3 Z M875 7 Q875 6.5 875.5 6.5 H883 Q883.5 6.5 883.5 7 V18.3 Q883.5 18.8 883 18.8 H875 Z" fill="none" stroke="#f2f2f2" stroke-width="1.2"/>
<path d="M868.8 9.3 H872.8 M868.8 11.6 H872.8 M868.8 13.9 H872.8 M868.8 16.2 H872.8 M877.2 9.3 H881.2 M877.2 11.6 H881.2 M877.2 13.9 H881.2 M877.2 16.2 H881.2" stroke="#e6e6e6" stroke-width="1.1"/>
<path d="M875 18.8 V20.2" stroke="#f2f2f2" stroke-width="1.2"/>
<path d="M894.5 10 H909.2 V19.2 H898 L894.8 22.3 V19.2 H894.5 Z" fill="none" stroke="#5a9af5" stroke-width="1.1" stroke-linejoin="round"/>
<path d="M894.5 10 L901.9 15.6 L909.2 10" fill="none" stroke="#5a9af5" stroke-width="1.1"/>
</svg>
</body></html>
